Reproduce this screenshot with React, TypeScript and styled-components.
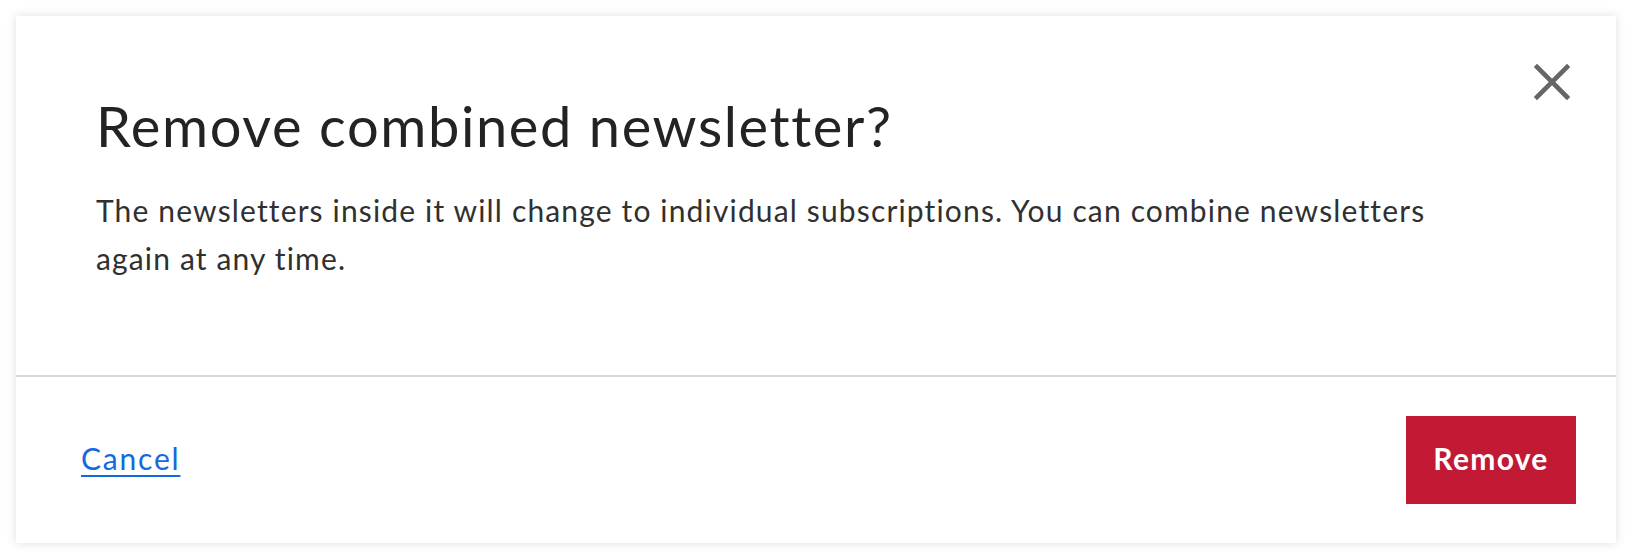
import React from 'react';
import styled, {createGlobalStyle} from 'styled-components';

const GlobalStyle = createGlobalStyle`
  html, body {
    margin: 0;
    padding: 0;
    background: #fff;
  }
  body {
    font-family: Lato, "Open Sans", sans-serif;
    -webkit-font-smoothing: antialiased;
  }
`

const Page = styled.div`
  padding: 16px;
  width: 1632px;
  height: 560px;
  box-sizing: border-box;
`

const Dialog = styled.div`
  position: relative;
  width: 1600px;
  height: 527px;
  background: #fff;
  box-shadow: 0 0 10px rgba(0, 0, 0, 0.13);
  display: flex;
  flex-direction: column;
`

const Body = styled.div`
  height: 359px;
  box-sizing: border-box;
  padding: 76px 82px 0 80px;
`

const Title = styled.h2`
  margin: 0;
  font-size: 56px;
  line-height: 68px;
  font-weight: 400;
  letter-spacing: 1.6px;
  color: #232323;
`

const Text = styled.p`
  margin: 26px 0 0 0;
  max-width: 1380px;
  font-size: 30px;
  line-height: 48px;
  font-weight: 400;
  letter-spacing: 1.15px;
  color: #303030;
`

const CloseButton = styled.button`
  position: absolute;
  top: 42px;
  right: 40px;
  width: 48px;
  height: 48px;
  padding: 0;
  border: none;
  background: transparent;
  cursor: pointer;
  display: flex;
  align-items: center;
  justify-content: center;
`

const Divider = styled.hr`
  margin: 0;
  border: none;
  height: 2px;
  background: #d7d7d7;
`

const Footer = styled.div`
  flex: 1;
  display: flex;
  align-items: center;
  justify-content: space-between;
  padding: 0 40px 0 65px;
`

const LinkButton = styled.a`
  margin-bottom: 4px;
  font-size: 30px;
  line-height: 40px;
  letter-spacing: 1.8px;
  color: #126ade;
  text-decoration: underline;
  text-decoration-thickness: 2px;
  text-underline-offset: 5px;
  cursor: pointer;
`

const DangerButton = styled.button`
  height: 88px;
  padding: 0 24px 4px;
  min-width: 170px;
  border: none;
  background: #c21935;
  color: #fff;
  font-family: Lato, sans-serif;
  font-size: 30px;
  font-weight: 700;
  letter-spacing: 1.3px;
  cursor: pointer;
`

export default function App() {
  return (
    <>
      <GlobalStyle/>
      <Page>
        <Dialog role="dialog">
          <CloseButton aria-label="Close">
            <svg width="36" height="36" viewBox="0 0 36 36">
              <path d="M3 3 L33 33 M33 3 L3 33" stroke="#666" strokeWidth="4.6" strokeLinecap="square"/>
            </svg>
          </CloseButton>
          <Body>
            <Title>Remove combined newsletter?</Title>
            <Text>
              The newsletters inside it will change to individual subscriptions. You can combine newsletters again at any time.
            </Text>
          </Body>
          <Divider/>
          <Footer>
            <LinkButton>Cancel</LinkButton>
            <DangerButton>Remove</DangerButton>
          </Footer>
        </Dialog>
      </Page>
    </>
  );
}
